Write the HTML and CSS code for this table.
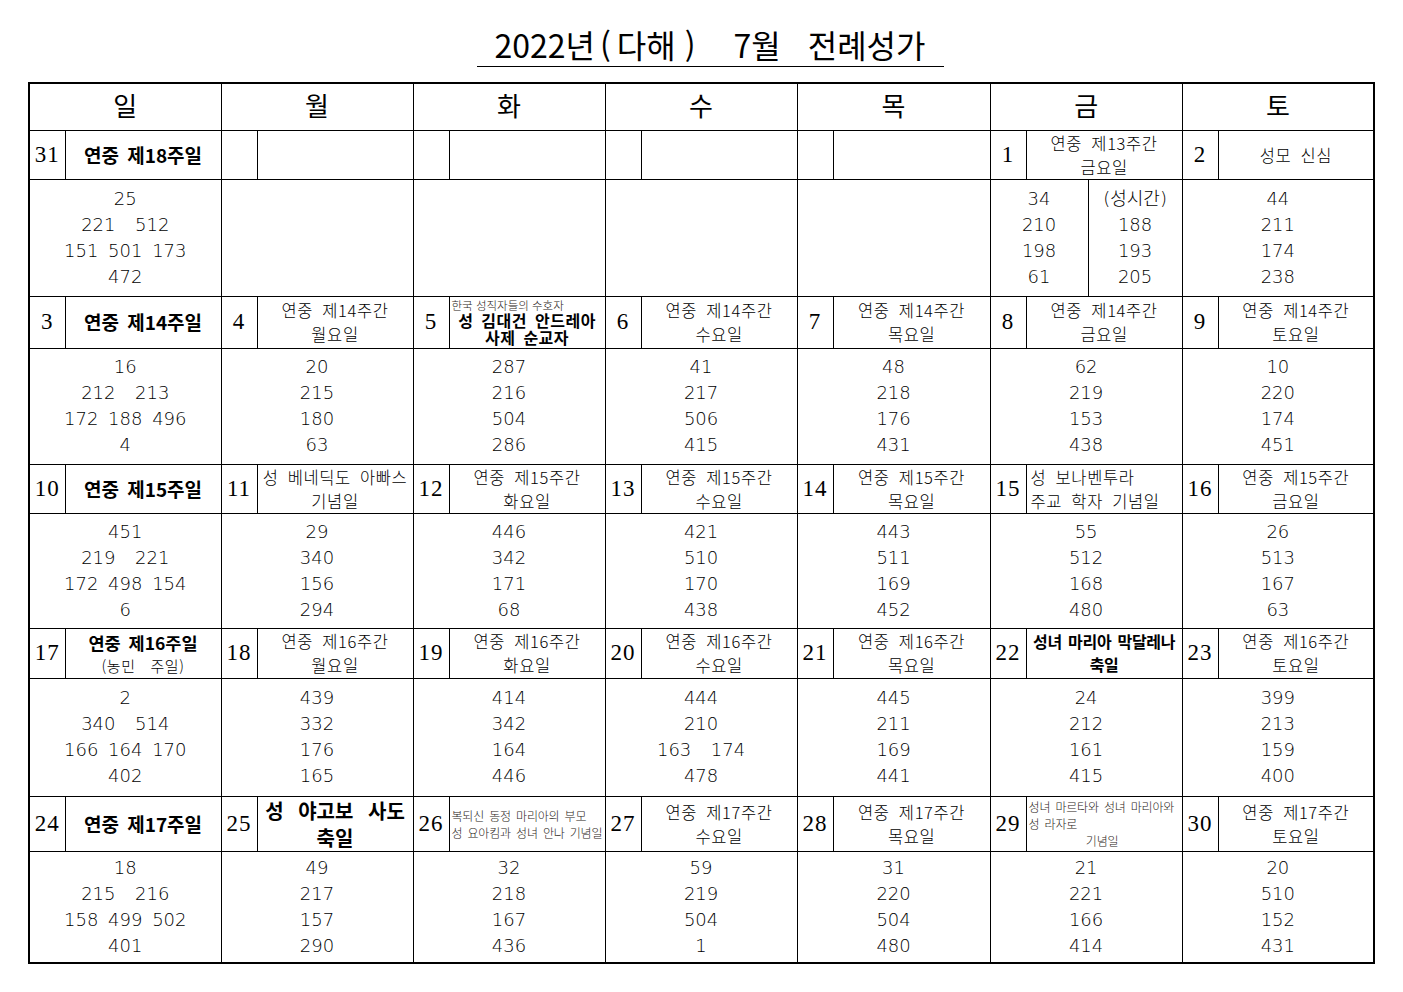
FILE: index.html
```html
<!DOCTYPE html>
<html lang="ko">
<head>
<meta charset="utf-8">
<title>2022년(다해) 7월 전례성가</title>
<link rel="stylesheet" href="styles.css">
</head>
<body>
<div class="page">
  <div class="title-wrap">
    <h1 class="title">2022년<span class="pl">(</span>다해<span class="pr">)</span><span class="gap1"></span>7월<span class="gap2"></span>전례성가</h1>
  </div>
  <table class="cal">
    <colgroup>
      <col class="c-dn"><col class="c-dt">
      <col class="c-dn"><col class="c-dt">
      <col class="c-dn"><col class="c-dt">
      <col class="c-dn"><col class="c-dt">
      <col class="c-dn"><col class="c-dt-w">
      <col class="c-dn"><col class="c-dt">
      <col class="c-dn"><col class="c-dt">
    </colgroup>
    <tr class="r-head">
      <th colspan="2">일</th><th colspan="2">월</th><th colspan="2">화</th><th colspan="2">수</th><th colspan="2">목</th><th colspan="2">금</th><th colspan="2">토</th>
    </tr>

    <tr class="r-t1">
      <td class="dn">31</td><td class="dt b">연중 제18주일</td>
      <td class="dn"></td><td class="dt"></td>
      <td class="dn"></td><td class="dt"></td>
      <td class="dn"></td><td class="dt"></td>
      <td class="dn"></td><td class="dt"></td>
      <td class="dn">1</td><td class="dt">연중 제13주간<br>금요일</td>
      <td class="dn">2</td><td class="dt">성모 신심</td>
    </tr>
    <tr class="r-n1">
      <td colspan="2" class="nums">25
221  512
151 501 173
472</td>
      <td colspan="2" class="nums"></td>
      <td colspan="2" class="nums"></td>
      <td colspan="2" class="nums"></td>
      <td colspan="2" class="nums"></td>
      <td colspan="2" class="nums split-cell"><div class="split"><div class="half">34
210
198
61</div><div class="half right">(성시간)
188
193
205</div></div></td>
      <td colspan="2" class="nums">44
211
174
238</td>
    </tr>

    <tr class="r-t2">
      <td class="dn">3</td><td class="dt b">연중 제14주일</td>
      <td class="dn">4</td><td class="dt">연중 제14주간<br>월요일</td>
      <td class="dn">5</td><td class="dt kim"><div class="kim-sub">한국 성직자들의 수호자</div><div class="kim-main">성 김대건 안드레아<br>사제 순교자</div></td>
      <td class="dn">6</td><td class="dt">연중 제14주간<br>수요일</td>
      <td class="dn">7</td><td class="dt">연중 제14주간<br>목요일</td>
      <td class="dn">8</td><td class="dt">연중 제14주간<br>금요일</td>
      <td class="dn">9</td><td class="dt">연중 제14주간<br>토요일</td>
    </tr>
    <tr class="r-n2">
      <td colspan="2" class="nums">16
212  213
172 188 496
4</td>
      <td colspan="2" class="nums">20
215
180
63</td>
      <td colspan="2" class="nums">287
216
504
286</td>
      <td colspan="2" class="nums">41
217
506
415</td>
      <td colspan="2" class="nums">48
218
176
431</td>
      <td colspan="2" class="nums">62
219
153
438</td>
      <td colspan="2" class="nums">10
220
174
451</td>
    </tr>

    <tr class="r-t3">
      <td class="dn">10</td><td class="dt b">연중 제15주일</td>
      <td class="dn">11</td><td class="dt">성 베네딕도 아빠스<br>기념일</td>
      <td class="dn">12</td><td class="dt">연중 제15주간<br>화요일</td>
      <td class="dn">13</td><td class="dt">연중 제15주간<br>수요일</td>
      <td class="dn">14</td><td class="dt">연중 제15주간<br>목요일</td>
      <td class="dn">15</td><td class="dt left">성 보나벤투라<br>주교 학자 기념일</td>
      <td class="dn">16</td><td class="dt">연중 제15주간<br>금요일</td>
    </tr>
    <tr class="r-n3">
      <td colspan="2" class="nums">451
219  221
172 498 154
6</td>
      <td colspan="2" class="nums">29
340
156
294</td>
      <td colspan="2" class="nums">446
342
171
68</td>
      <td colspan="2" class="nums">421
510
170
438</td>
      <td colspan="2" class="nums">443
511
169
452</td>
      <td colspan="2" class="nums">55
512
168
480</td>
      <td colspan="2" class="nums">26
513
167
63</td>
    </tr>

    <tr class="r-t4">
      <td class="dn">17</td><td class="dt sun2"><div class="b">연중 제16주일</div><div class="sub">(농민 주일)</div></td>
      <td class="dn">18</td><td class="dt">연중 제16주간<br>월요일</td>
      <td class="dn">19</td><td class="dt">연중 제16주간<br>화요일</td>
      <td class="dn">20</td><td class="dt">연중 제16주간<br>수요일</td>
      <td class="dn">21</td><td class="dt">연중 제16주간<br>목요일</td>
      <td class="dn">22</td><td class="dt b feast-s">성녀 마리아 막달레나<br>축일</td>
      <td class="dn">23</td><td class="dt">연중 제16주간<br>토요일</td>
    </tr>
    <tr class="r-n4">
      <td colspan="2" class="nums">2
340  514
166 164 170
402</td>
      <td colspan="2" class="nums">439
332
176
165</td>
      <td colspan="2" class="nums">414
342
164
446</td>
      <td colspan="2" class="nums">444
210
163  174
478</td>
      <td colspan="2" class="nums">445
211
169
441</td>
      <td colspan="2" class="nums">24
212
161
415</td>
      <td colspan="2" class="nums">399
213
159
400</td>
    </tr>

    <tr class="r-t5">
      <td class="dn">24</td><td class="dt b">연중 제17주일</td>
      <td class="dn">25</td><td class="dt b feast-l">성 야고보 사도<br>축일</td>
      <td class="dn">26</td><td class="dt small left">복되신 동정 마리아의 부모<br>성 요아킴과 성녀 안나 기념일</td>
      <td class="dn">27</td><td class="dt">연중 제17주간<br>수요일</td>
      <td class="dn">28</td><td class="dt">연중 제17주간<br>목요일</td>
      <td class="dn">29</td><td class="dt small left marta"><div>성녀 마르타와 성녀 마리아와</div><div>성 라자로</div><div class="ctr">기념일</div></td>
      <td class="dn">30</td><td class="dt">연중 제17주간<br>토요일</td>
    </tr>
    <tr class="r-n5">
      <td colspan="2" class="nums">18
215  216
158 499 502
401</td>
      <td colspan="2" class="nums">49
217
157
290</td>
      <td colspan="2" class="nums">32
218
167
436</td>
      <td colspan="2" class="nums">59
219
504
1</td>
      <td colspan="2" class="nums">31
220
504
480</td>
      <td colspan="2" class="nums">21
221
166
414</td>
      <td colspan="2" class="nums">20
510
152
431</td>
    </tr>
  </table>
</div>
</body>
</html>
```
FILE: styles.css
```css
html, body {
  margin: 0;
  padding: 0;
  background: #fff;
  color: #000;
  font-family: "Noto Sans CJK KR", "Noto Sans", sans-serif;
}

.page {
  padding-left: 28px;
}

.title-wrap {
  width: 1346px;
  height: 82px;
  box-sizing: border-box;
  padding-left: 18px;
  display: flex;
  justify-content: center;
  align-items: flex-start;
}

.title {
  margin: 24px 0 0 0;
  height: 40px;
  padding: 0 18px 2px 18px;
  font-size: 32px;
  line-height: 40px;
  font-weight: 400;
  border-bottom: 1px solid #000;
  white-space: nowrap;
  display: flex;
  align-items: center;
}

.title .pl {
  margin: 0 6px 0 5px;
}

.title .pr {
  margin: 0 0 0 9px;
}

.title .gap1 {
  display: inline-block;
  width: 38px;
}

.title .gap2 {
  display: inline-block;
  width: 27px;
}

.cal {
  border-collapse: collapse;
  table-layout: fixed;
  width: 1346px;
  border: 2px solid #000;
}

.c-dn { width: 36px; }
.c-dt { width: 156px; }
.c-dt-w { width: 157px; }

.cal th,
.cal td {
  border: 1px solid #000;
  padding: 0;
  text-align: center;
  vertical-align: middle;
  overflow: hidden;
}

.cal th {
  font-size: 26px;
  font-weight: 400;
  line-height: 30px;
  padding-bottom: 4px;
}

.r-head { height: 47px; }
.r-t1 { height: 47px; }
.r-n1 { height: 116px; }
.r-t2 { height: 52px; }
.r-n2 { height: 116px; }
.r-t3 { height: 49px; }
.r-n3 { height: 115px; }
.r-t4 { height: 50px; }
.r-n4 { height: 118px; }
.r-t5 { height: 54px; }
.r-n5 { height: 112px; }

.dn {
  font-family: "Liberation Serif", "DejaVu Serif", serif;
  font-size: 23px;
  letter-spacing: 1px;
  line-height: 26px;
}

.dt {
  font-size: 16.5px;
  font-weight: 300;
  line-height: 24px;
  letter-spacing: 0.6px;
  word-spacing: 4px;
  white-space: nowrap;
}

.dt.b,
.dt .b {
  font-size: 19px;
  font-weight: 700;
  letter-spacing: 0;
  word-spacing: 3px;
}

.dt.left {
  text-align: left;
  padding-left: 4px;
}

.dt.small {
  font-size: 12px;
  line-height: 17px;
  word-spacing: 2px;
  letter-spacing: -0.2px;
  color: #2a2420;
  padding-left: 2px;
}

.marta {
  line-height: 16px;
  vertical-align: top;
  padding-top: 2px;
}

.marta .ctr {
  text-align: center;
  padding-right: 6px;
}

.cal td.kim {
  vertical-align: middle;
  letter-spacing: 0;
  overflow: visible;
}

.kim-sub {
  text-align: left;
  padding-left: 2px;
  font-size: 11.5px;
  line-height: 14px;
  word-spacing: 0;
  color: #2a2420;
}

.kim-main {
  font-size: 16px;
  font-weight: 700;
  line-height: 17px;
  word-spacing: 3px;
  letter-spacing: 0.5px;
}

.sun2 .b {
  font-size: 17.5px;
  line-height: 25px;
}

.sun2 .sub {
  font-size: 15px;
  line-height: 22px;
  font-weight: 300;
  word-spacing: 10px;
}

.feast-s {
  font-size: 16px !important;
  line-height: 23px;
  word-spacing: 2px !important;
  letter-spacing: -0.3px !important;
}

.feast-l {
  font-size: 20px !important;
  line-height: 27px;
  word-spacing: 9px !important;
}

.nums {
  font-family: "DejaVu Sans", sans-serif;
  font-weight: 200;
  font-size: 18px;
  line-height: 26px;
  white-space: pre;
  word-spacing: 4px;
}

.split-cell {
  padding: 0;
  height: 100%;
}

.split {
  display: grid;
  grid-template-columns: 97px 1fr;
  height: 116px;
}

.half {
  display: flex;
  align-items: center;
  justify-content: center;
  text-align: center;
}

.half.right {
  border-left: 1px solid #000;
  font-family: "DejaVu Sans", "Noto Sans CJK KR", sans-serif;
}
```
